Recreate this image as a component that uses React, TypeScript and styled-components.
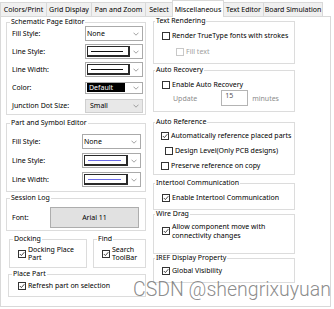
import styled, { createGlobalStyle } from "styled-components";

const GlobalStyle = createGlobalStyle`
  html, body {
    margin: 0;
    padding: 0;
    background: #fff;
  }
`;

const Window = styled.div`
  position: relative;
  width: 334px;
  height: 309px;
  overflow: hidden;
  background: #fff;
  font-family: "Noto Sans", "Liberation Sans", sans-serif;
  font-size: 7px;
  color: #000;
`;

const TabBar = styled.div`
  display: flex;
  align-items: flex-end;
  height: 16px;
  padding-left: 1px;
`;

const Tab = styled.div<{ $w: number; $active?: boolean }>`
  position: relative;
  z-index: ${(p) => (p.$active ? 2 : 1)};
  box-sizing: border-box;
  width: ${(p) => p.$w}px;
  height: ${(p) => (p.$active ? 17 : 14)}px;
  margin-left: -1px;
  margin-bottom: ${(p) => (p.$active ? -1 : 0)}px;
  display: flex;
  align-items: center;
  justify-content: center;
  border: 1px solid #d9d9d9;
  border-bottom: 0;
  background: ${(p) => (p.$active ? "#fff" : "#f0f0f0")};
  white-space: nowrap;
`;

const Panel = styled.div`
  box-sizing: border-box;
  width: 331px;
  height: 291px;
  border: 1px solid #d9d9d9;
  display: flex;
  gap: 7px;
  padding-left: 5px;
`;

const Column = styled.div<{ $w: number }>`
  width: ${(p) => p.$w}px;
  display: flex;
  flex-direction: column;
`;

const Group = styled.fieldset<{ $mt?: number; $pt?: number; $pb?: number; $grow?: boolean }>`
  box-sizing: border-box;
  min-inline-size: 0;
  margin: ${(p) => p.$mt ?? 0}px 0 0 0;
  padding: ${(p) => p.$pt ?? 0}px 2px ${(p) => p.$pb ?? 0}px 5px;
  border: 1px solid #dcdcdc;
  flex: ${(p) => (p.$grow ? "1" : "none")};
`;

const Legend = styled.legend<{ $x?: number }>`
  padding: 0 1px;
  margin-left: ${(p) => p.$x ?? -2}px;
  line-height: 8px;
`;

const Stack = styled.div<{ $gap: number }>`
  display: flex;
  flex-direction: column;
  gap: ${(p) => p.$gap}px;
`;

const FieldRow = styled.div<{ $h?: number }>`
  display: flex;
  align-items: center;
  height: ${(p) => p.$h ?? 15}px;
`;

const Label = styled.span<{ $w: number }>`
  width: ${(p) => p.$w}px;
  flex: none;
  white-space: nowrap;
`;

const Combo = styled.div<{ $w: number; $h?: number; $muted?: boolean }>`
  box-sizing: border-box;
  width: ${(p) => p.$w}px;
  height: ${(p) => p.$h ?? 15}px;
  border: 1px solid ${(p) => (p.$muted ? "#cfcfcf" : "#aaaaaa")};
  background: ${(p) => (p.$muted ? "#e8e8e8" : "#fff")};
  display: flex;
  align-items: center;
  gap: 3px;
  padding: 0 3px 0 ${(p) => (p.$muted ? 4 : 1)}px;
`;

const ComboText = styled.span`
  flex: 1;
  white-space: nowrap;
`;

const LineSwatch = styled.span<{ $color: string }>`
  flex: 1;
  box-sizing: border-box;
  height: 11px;
  border: 1px solid #2a2a2a;
  border-right-width: 2px;
  border-bottom-width: 2px;
  display: flex;
  align-items: center;
  padding: 0 5px 0 3px;

  &::before {
    content: "";
    flex: 1;
    height: 1px;
    background: ${(p) => p.$color};
  }
`;

const ColorSwatch = styled.span`
  flex: 1;
  height: 9px;
  background: #000;
  color: #fff;
  line-height: 9px;
  padding-left: 2px;
  margin-right: 5px;
`;

const FontButton = styled.div`
  box-sizing: border-box;
  width: 89px;
  height: 21px;
  border: 1px solid #adadad;
  background: #e1e1e1;
  display: flex;
  align-items: center;
  justify-content: center;
`;

const CheckRow = styled.div<{ $pl?: number; $disabled?: boolean; $lh?: number }>`
  display: flex;
  align-items: center;
  gap: 2px;
  min-height: 10px;
  padding-left: ${(p) => p.$pl ?? 3}px;
  color: ${(p) => (p.$disabled ? "#a0a0a0" : "#000")};
  line-height: ${(p) => p.$lh ?? 10}px;
  white-space: nowrap;
`;

const Box = styled.span<{ $disabled?: boolean }>`
  box-sizing: border-box;
  flex: none;
  width: 8px;
  height: 8px;
  border: 1px solid ${(p) => (p.$disabled ? "#c8c8c8" : "#333")};
  background: #fff;
  display: flex;
  align-items: center;
  justify-content: center;
`;

const PairRow = styled.div`
  display: flex;
  gap: 6px;
  margin-top: 4px;
  padding-left: 3px;
`;

const InlineRow = styled.div`
  display: flex;
  align-items: center;
  height: 16px;
  padding-left: 14px;
  color: #8c8c8c;
`;

const NumberBox = styled.div`
  box-sizing: border-box;
  width: 27px;
  height: 16px;
  margin: 0 4px 0 24px;
  border: 1px solid #b4b4b4;
  padding: 1px 3px;
  line-height: 8px;
  align-self: stretch;
  color: #555;
`;

const Watermark = styled.div`
  position: absolute;
  left: 133px;
  top: 279px;
  font-family: Roboto, "Liberation Sans", sans-serif;
  font-weight: 300;
  font-size: 19.5px;
  line-height: 22px;
  color: rgba(110, 110, 110, 0.8);
  white-space: nowrap;
  pointer-events: none;
`;

const Chevron = () => (
  <svg width="6" height="4" viewBox="0 0 6 4">
    <polyline points="0.5,0.7 3,3.2 5.5,0.7" fill="none" stroke="#8a8a8a" strokeWidth="0.8" />
  </svg>
);

const Check = ({ checked, disabled }: { checked?: boolean; disabled?: boolean }) => (
  <Box $disabled={disabled}>
    {checked && (
      <svg width="6" height="6" viewBox="0 0 6 6">
        <polyline points="0.8,3 2.4,4.6 5.3,1.2" fill="none" stroke="#333" strokeWidth="0.9" />
      </svg>
    )}
  </Box>
);

const tabs: [string, number][] = [
  ["Colors/Print", 47],
  ["Grid Display", 46],
  ["Pan and Zoom", 55],
  ["Select", 28],
  ["Miscellaneous", 52],
  ["Text Editor", 41],
  ["Board Simulation", 60],
];

export default function App() {
  return (
    <Window>
      <GlobalStyle />
      <TabBar>
        {tabs.map(([name, w]) => (
          <Tab key={name} $w={w} $active={name === "Miscellaneous"}>
            {name}
          </Tab>
        ))}
      </TabBar>
      <Panel>
        <Column $w={140}>
          <Group $mt={1} $pb={1}>
            <Legend>Schematic Page Editor</Legend>
            <Stack $gap={3}>
              <FieldRow>
                <Label $w={73}>Fill Style:</Label>
                <Combo $w={58}>
                  <ComboText>None</ComboText>
                  <Chevron />
                </Combo>
              </FieldRow>
              <FieldRow>
                <Label $w={73}>Line Style:</Label>
                <Combo $w={58}>
                  <LineSwatch $color="#111" />
                  <Chevron />
                </Combo>
              </FieldRow>
              <FieldRow>
                <Label $w={73}>Line Width:</Label>
                <Combo $w={58}>
                  <LineSwatch $color="#111" />
                  <Chevron />
                </Combo>
              </FieldRow>
              <FieldRow>
                <Label $w={73}>Color:</Label>
                <Combo $w={58} $h={12}>
                  <ColorSwatch>Default</ColorSwatch>
                  <Chevron />
                </Combo>
              </FieldRow>
              <FieldRow>
                <Label $w={73}>Junction Dot Size:</Label>
                <Combo $w={58} $h={14} $muted>
                  <ComboText>Small</ComboText>
                  <Chevron />
                </Combo>
              </FieldRow>
            </Stack>
          </Group>

          <Group $mt={4} $pt={7} $pb={4}>
            <Legend>Part and Symbol Editor</Legend>
            <Stack $gap={4}>
              <FieldRow>
                <Label $w={70}>Fill Style:</Label>
                <Combo $w={59}>
                  <ComboText>None</ComboText>
                  <Chevron />
                </Combo>
              </FieldRow>
              <FieldRow>
                <Label $w={70}>Line Style:</Label>
                <Combo $w={59}>
                  <LineSwatch $color="#6a6ae6" />
                  <Chevron />
                </Combo>
              </FieldRow>
              <FieldRow>
                <Label $w={70}>Line Width:</Label>
                <Combo $w={59}>
                  <LineSwatch $color="#6a6ae6" />
                  <Chevron />
                </Combo>
              </FieldRow>
            </Stack>
          </Group>

          <Group $mt={2} $pt={5} $pb={2}>
            <Legend>Session Log</Legend>
            <FieldRow $h={21}>
              <Label $w={38}>Font:</Label>
              <FontButton>Arial 11</FontButton>
            </FieldRow>
          </Group>

          <PairRow>
            <Group $pt={3} $pb={5} $grow>
              <Legend>Docking</Legend>
              <CheckRow $lh={8}>
                <Check checked />
                <span>
                  Docking Place
                  <br />
                  Part
                </span>
              </CheckRow>
            </Group>
            <Group $pt={3} $pb={5} style={{ width: 53 }}>
              <Legend>Find</Legend>
              <CheckRow $lh={8}>
                <Check checked />
                <span>
                  Search
                  <br />
                  ToolBar
                </span>
              </CheckRow>
            </Group>
          </PairRow>

          <Group $mt={2} $pt={3} $pb={5} style={{ marginLeft: 2 }}>
            <Legend>Place Part</Legend>
            <CheckRow $pl={4}>
              <Check checked />
              <span>Refresh part on selection</span>
            </CheckRow>
          </Group>
        </Column>

        <Column $w={142}>
          <Group $pt={6} $pb={6}>
            <Legend $x={-4}>Text Rendering</Legend>
            <Stack $gap={6}>
              <CheckRow>
                <Check />
                <span>Render TrueType fonts with strokes</span>
              </CheckRow>
              <CheckRow $pl={17} $disabled>
                <Check disabled />
                <span>Fill text</span>
              </CheckRow>
            </Stack>
          </Group>

          <Group $mt={2} $pt={6} $pb={5}>
            <Legend $x={-4}>Auto Recovery</Legend>
            <CheckRow>
              <Check />
              <span>Enable Auto Recovery</span>
            </CheckRow>
            <InlineRow>
              <span>Update</span>
              <NumberBox>15</NumberBox>
              <span>minutes</span>
            </InlineRow>
          </Group>

          <Group $mt={6} $pt={5} $pb={3}>
            <Legend $x={-4}>Auto Reference</Legend>
            <Stack $gap={5}>
              <CheckRow $pl={2}>
                <Check checked />
                <span>Automatically reference placed parts</span>
              </CheckRow>
              <CheckRow $pl={6}>
                <Check />
                <span>Design Level(Only PCB designs)</span>
              </CheckRow>
              <CheckRow $pl={2}>
                <Check />
                <span>Preserve reference on copy</span>
              </CheckRow>
            </Stack>
          </Group>

          <Group $mt={4} $pt={6} $pb={6}>
            <Legend $x={-4}>Intertool Communication</Legend>
            <CheckRow>
              <Check checked />
              <span>Enable Intertool Communication</span>
            </CheckRow>
          </Group>

          <Group $mt={0} $pt={4} $pb={13}>
            <Legend $x={-4}>Wire Drag</Legend>
            <CheckRow $lh={9}>
              <Check checked />
              <span>
                Allow component move with
                <br />
                connectivity changes
              </span>
            </CheckRow>
          </Group>

          <Group $pt={4} $pb={6}>
            <Legend $x={-4}>IREF Display Property</Legend>
            <CheckRow>
              <Check checked />
              <span>Global Visibility</span>
            </CheckRow>
          </Group>
        </Column>
      </Panel>
      <Watermark>CSDN @shengrixuyuan</Watermark>
    </Window>
  );
}
